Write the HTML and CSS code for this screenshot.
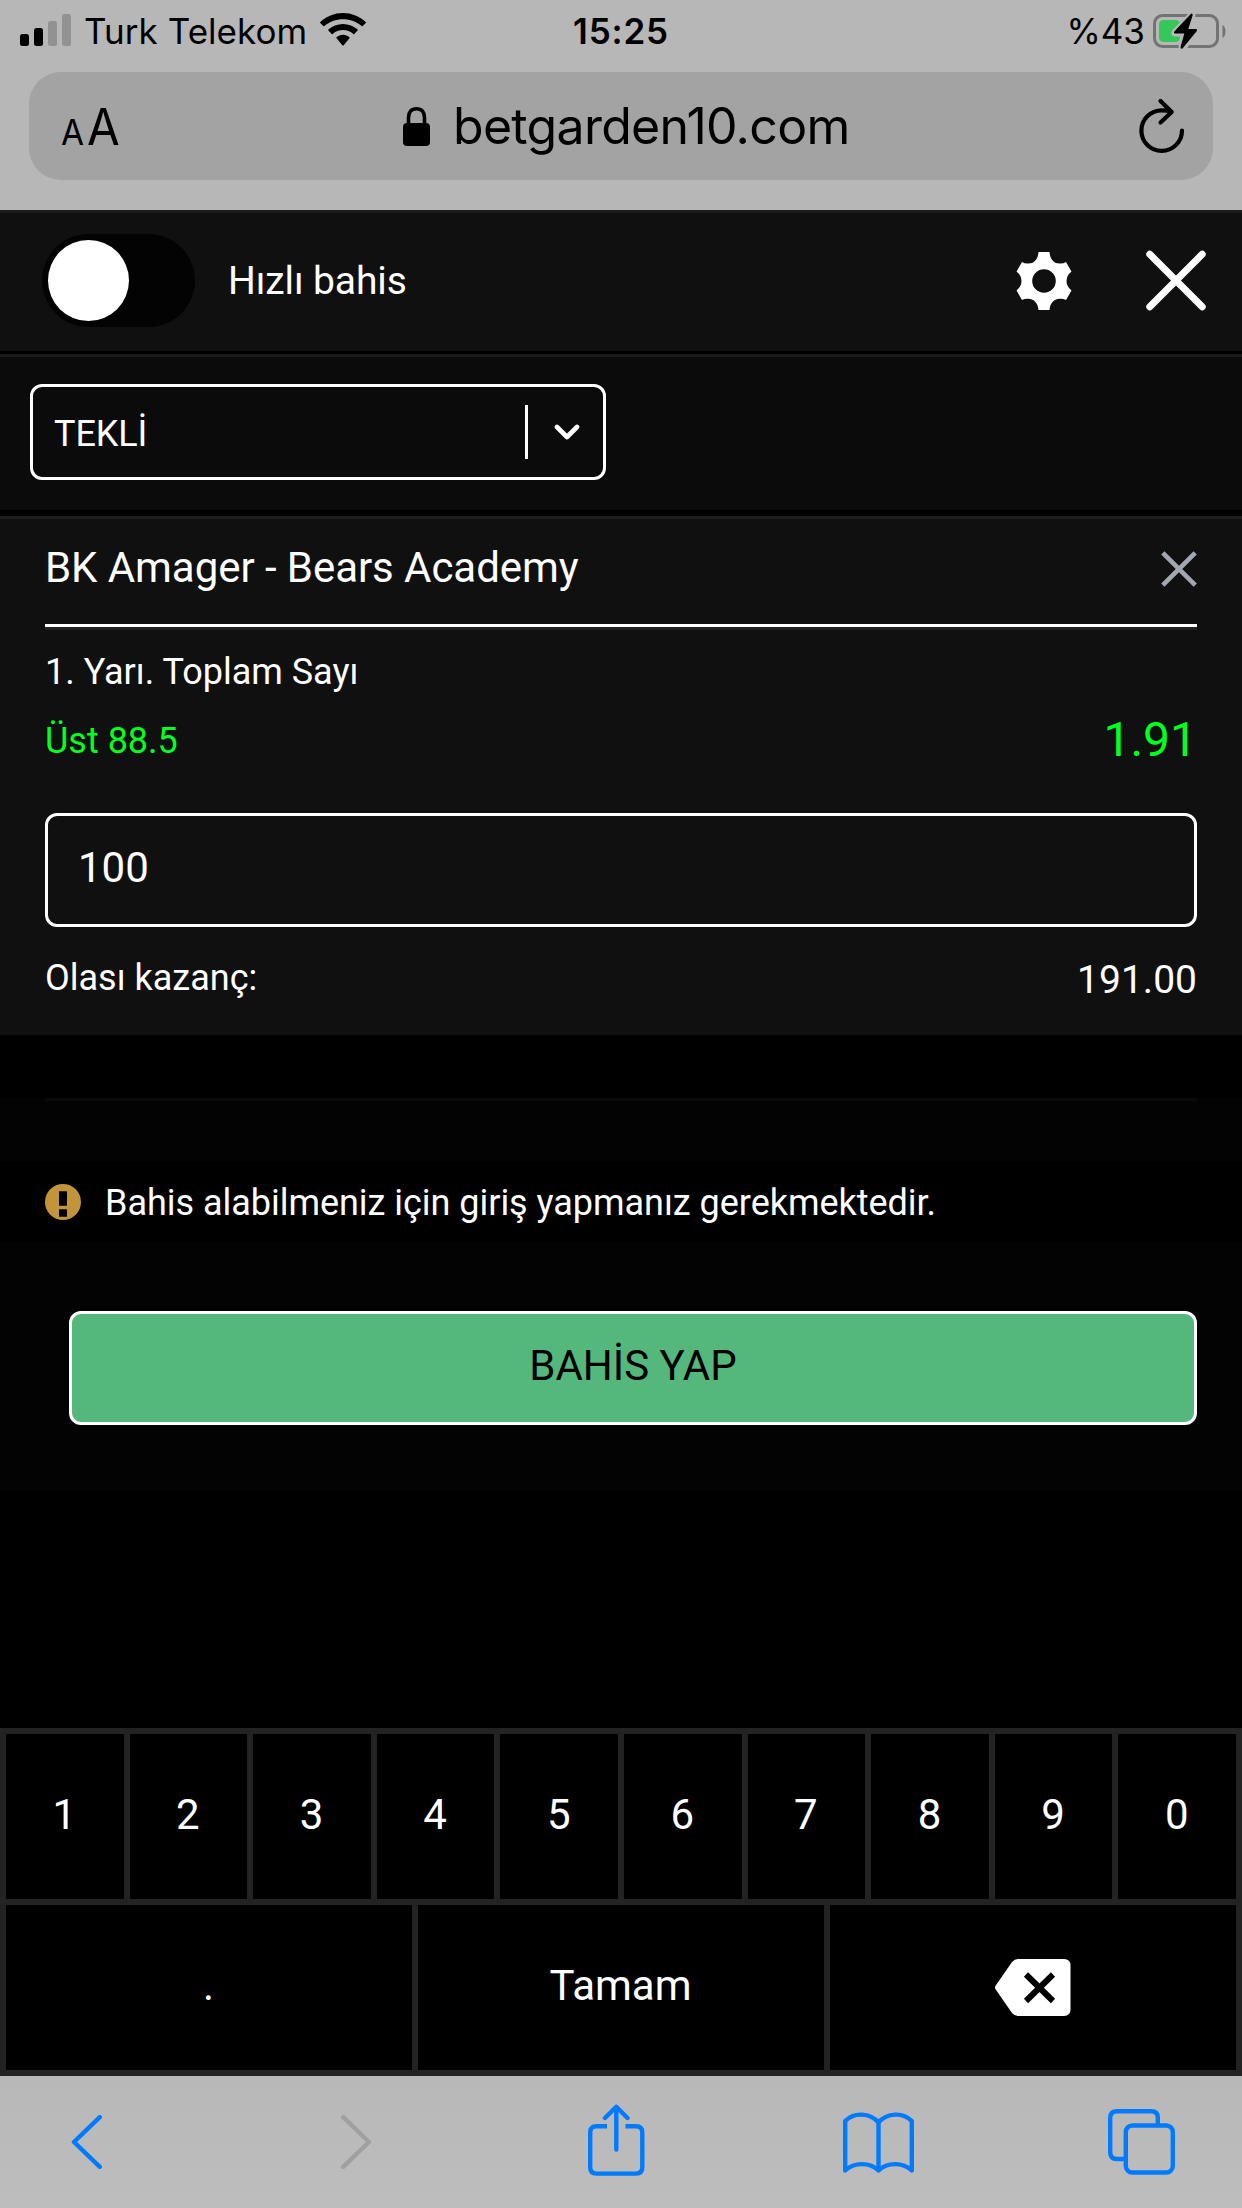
FILE: index.html
```html
<!DOCTYPE html>
<html lang="tr">
<head>
<meta charset="utf-8">
<title>betgarden10.com</title>
<link rel="stylesheet" href="styles.css">
</head>
<body>
<header class="browser">
  <div class="status">
    <div class="status-left">
      <svg class="signal" width="51" height="32" viewBox="0 0 51 32"><g><rect y="20" width="9" height="12" rx="2.5"/><rect x="14" y="14" width="9" height="18" rx="2.5"/></g><g fill="#929292"><rect x="28" y="7" width="9" height="25" rx="2.5"/><rect x="42" width="9" height="32" rx="2.5"/></g></svg>
      <span class="carrier">Turk Telekom</span>
      <svg class="wifi" width="46" height="33" viewBox="0 0 46 33"><path d="M23 0C14.300 0 6.300 3.400.3 9.100q-.5.500 0 1l3 3q.5.500 1 0C9.300 8.700 15.800 6.200 23 6.200s13.700 2.500 18.700 6.900q.5.500 1 0l3-3q.5-.500 0-1C39.700 3.400 31.700 0 23 0zM23 11c-5.600 0-10.800 2.100-14.600 5.600q-.6.500 0 1l3.300 3.400q.5.500 1 0c2.700-2.500 6.300-3.900 10.300-3.900s7.600 1.400 10.300 3.900q.5.500 1 0l3.300-3.400q.6-.500 0-1C33.800 13.100 28.600 11 23 11zM23 21.800c-2.500 0-4.700.9-6.400 2.400q-.6.500 0 1l5.700 7q.7.800 1.400 0l5.700-7q.6-.500 0-1c-1.700-1.500-3.900-2.400-6.400-2.400z"/></svg>
    </div>
    <span class="clock">15:25</span>
    <div class="status-right">
      <span class="percent">%43</span>
      <svg class="battery" width="74" height="37" viewBox="0 0 74 37"><rect x="1.500" y="2.500" width="63" height="31" rx="8" fill="none" stroke="#737373" stroke-width="3"/><path d="M69.500 12c4 1.800 4 11.200 0 13z" fill="#737373"/><rect x="6" y="7" width="21" height="22" rx="4.500" fill="#34c759"/><path d="M39 .500L21 19q-1 2 1 2h9L28 34q0 3 2 2L44 18q1-2-1-2h-7L40 2q0-2.500-1-1.500z" stroke="#b7b7b7" stroke-width="5" stroke-linejoin="round"/><path d="M38 .800L21.300 18.500q-1 2 1 2h9L27.500 34q.3 2.500 2 1.500L43.800 18q.8-2-1-2h-7.500L39.700 2q-.3-2.300-1.700-1.200z"/></svg>
    </div>
  </div>
  <div class="address">
    <div class="reader"><span class="small-a">A</span><span class="big-a">A</span></div>
    <svg class="lock" width="27" height="39" viewBox="0 0 27 39"><rect y="16" width="27" height="23" rx="4"/><path d="M5.500 18v-7.500C5.500 5 8.500 1.800 13.500 1.800s8 3.200 8 8.700V18" fill="none" stroke="#000" stroke-width="3.600"/></svg>
    <span class="url">betgarden10.com</span>
    <svg class="reload" width="46" height="56" viewBox="0 0 46 56" fill="none" stroke="#000" stroke-width="4.200" stroke-linecap="round" stroke-linejoin="round"><path d="M43 32.500A20.300 20.300 0 1 1 22.700 12.300q5 0 9.800 1.200M21.500 3l11.200 11L21.500 24.500"/></svg>
  </div>
</header>

<main class="slip">
  <section class="quick">
    <div class="toggle"><div class="knob"></div></div>
    <span class="quick-label">Hızlı bahis</span>
    <svg class="gear" width="56" height="58" viewBox="0 0 56 58"><path fill="#fff" fill-rule="evenodd" d="M22.500 0h11C34 7.500 38 11.500 43.500 11.500Q47.500 11.700 50 10L55.500 19.500Q50.500 23.500 50.500 29T55.500 38.500L50 48Q47.500 46.500 43.500 46.700C38 47 34 51 33.500 58h-11C22 51 18 47 12.500 46.700Q8.500 46.500 6 48L.5 38.500Q5.500 34.500 5.500 29T.5 19.500L6 10Q8.500 11.700 12.500 11.500C18 11.500 22 7.500 22.500 0zM28 17.200a11.800 11.800 0 1 0 0 23.600 11.800 11.800 0 0 0 0-23.600z"/></svg>
    <svg class="close" width="60" height="61" viewBox="0 0 60 61" stroke="#fff" stroke-width="7" stroke-linecap="round"><path d="M3.800 4.300L56.200 56.700M56.200 4.300L3.800 56.700"/></svg>
  </section>

  <section class="mode">
    <div class="select">
      <span class="select-text">TEKLİ</span>
      <span class="select-line"></span>
      <svg width="26" height="16" viewBox="0 0 26 16" fill="none" stroke="#fff" stroke-width="4.600" stroke-linecap="round" stroke-linejoin="round"><path d="M3 3l10 10L23 3"/></svg>
    </div>
  </section>

  <section class="bet">
    <div class="match">
      <span class="match-name">BK Amager - Bears Academy</span>
      <svg class="remove" width="36" height="36" viewBox="0 0 36 36" stroke="#a3a7b0" stroke-width="4.600"><path d="M1.800 1.800l32.400 32.400M34.200 1.800L1.800 34.200"/></svg>
    </div>
    <div class="market">1. Yarı. Toplam Sayı</div>
    <div class="pick"><span class="outcome">Üst 88.5</span><span class="odds">1.91</span></div>
    <div class="stake">100</div>
    <div class="payout"><span class="payout-label">Olası kazanç:</span><span class="payout-sum">191.00</span></div>
  </section>

  <section class="divider"><div class="divider-line"></div></section>

  <section class="notice">
    <svg width="36" height="36" viewBox="0 0 36 36"><circle cx="18" cy="18" r="18" fill="#c2953d"/><path d="M14 7.300h8v14.400h-8zM14 25.300h8v7.400h-8z"/></svg>
    <span class="notice-text">Bahis alabilmeniz için giriş yapmanız gerekmektedir.</span>
  </section>

  <section class="action"><div class="submit"><span>BAHİS YAP</span></div></section>
</main>

<section class="keypad">
  <div class="keys">
    <div class="key">1</div><div class="key">2</div><div class="key">3</div><div class="key">4</div><div class="key">5</div><div class="key">6</div><div class="key">7</div><div class="key">8</div><div class="key">9</div><div class="key">0</div>
  </div>
  <div class="keys">
    <div class="key">.</div>
    <div class="key"><span class="done">Tamam</span></div>
    <div class="key"><svg class="erase" width="76" height="57" viewBox="0 0 76 57"><path fill="#fff" d="M.4 27L17 3Q19.500 0 23 0H69q6.500 0 6.500 6.500v44Q75.500 57 69 57H23Q19.500 57 17 54L.4 30Q-.5 28.500.4 27z"/><path d="M31 15.500l27 26.500M58 15.500L31 42" stroke="#000" stroke-width="6"/></svg></div>
  </div>
</section>

<nav class="toolbar">
  <svg class="back" width="31" height="54" viewBox="0 0 31 54"><path d="M28.800 2.200L3 27l25.800 24.800"/></svg>
  <svg class="forward" width="31" height="54" viewBox="0 0 31 54"><path d="M2.200 2.200L28 27 2.200 51.800"/></svg>
  <svg class="share" width="57" height="72" viewBox="0 0 57 72"><path stroke-linecap="butt" d="M19 22.300H8.500q-6.300 0-6.300 6.300v34.700q0 6.300 6.300 6.300h39.500q6.300 0 6.300-6.300V28.600q0-6.300-6.300-6.300H37.500"/><path d="M28.300 45.500V3M17 14L28.300 2.800 39.500 14"/></svg>
  <svg class="book" width="71" height="61" viewBox="0 0 71 61"><path d="M35.500 58.500V10.500C27 .5 11 0 2.200 9v49.500C11 50 27 50 35.500 58.500 44 50 60 50 68.800 58.500V9C60 0 44 .500 35.500 10.500"/></svg>
  <svg class="tabs" width="67" height="66" viewBox="0 0 67 66"><path d="M16 50H9q-6.800 0-6.800-6.800V9Q2.200 2.200 9 2.200h34.500q6.300 0 6.300 6.300V16"/><rect x="17.800" y="16.500" width="47" height="47" rx="6.500"/></svg>
</nav>
</body>
</html>
```
FILE: styles.css
```css
* { box-sizing: border-box; }

body {
  margin: 0;
  width: 1242px;
  height: 2208px;
  overflow: hidden;
  display: flex;
  flex-direction: column;
  background: #000;
  color: #fff;
  font-family: Roboto, "Liberation Sans", sans-serif;
  font-size: 36px;
  white-space: nowrap;
}

svg { display: block; flex: none; }

/* Browser chrome */
.browser {
  height: 210px;
  background: #b7b7b7;
  color: #000;
  font-family: Inter, "Liberation Sans", sans-serif;
}

.status {
  height: 72px;
  padding: 0 15px 10px 20px;
  display: grid;
  grid-template-columns: 1fr auto 1fr;
  align-items: center;
  font-size: 35px;
}

.status-left, .status-right { display: flex; align-items: center; }
.status-left { gap: 13px; }
.status-right { justify-content: flex-end; gap: 8px; }
.signal { margin-top: -2px; }
.carrier { letter-spacing: .05px; }
.wifi { margin-top: -3px; }
.clock { margin-right: 5px; font-weight: 600; letter-spacing: .8px; }

.address {
  height: 108px;
  margin: 0 29px;
  padding: 0 28px 0 32px;
  display: flex;
  align-items: center;
  border-radius: 32px;
  background: #a3a3a3;
}

.reader {
  display: flex;
  align-items: baseline;
  gap: 3px;
  width: 342px;
  transform: scaleX(.93);
  transform-origin: left;
}

.small-a { font-size: 36px; }
.big-a { font-size: 51px; }
.url { margin-left: 23px; font-size: 50px; letter-spacing: -.7px; }
.reload { margin-left: auto; }

/* Bet slip */
.quick {
  height: 144px;
  padding: 0 36px 3px 42px;
  display: flex;
  align-items: center;
  border-top: 3px solid #1c1c1c;
  border-bottom: 3px solid #000;
  background: #101010;
}

.toggle { width: 153px; height: 93px; padding: 6px; border-radius: 47px; background: #030303; }
.knob { width: 81px; height: 81px; border-radius: 50%; background: #fff; }
.quick-label { margin-left: 33px; font-size: 39px; letter-spacing: -.1px; }
.gear { margin-left: auto; }
.close { margin-left: 74px; }

.mode {
  height: 162px;
  padding: 27px 30px;
  border-top: 3px solid #1a1a1a;
  border-bottom: 6px solid #000;
  background: #0b0b0b;
}

.select {
  width: 576px;
  height: 96px;
  padding: 0 23px 0 21px;
  display: flex;
  align-items: center;
  border: 3px solid #fff;
  border-radius: 12px;
}

.select-text { flex: 1; padding-top: 4px; letter-spacing: -.1px; }
.select-line { width: 3px; height: 54px; margin-right: 26px; background: #fff; }

.bet {
  height: 519px;
  padding: 0 45px;
  border-top: 3px solid #1e1e1e;
  background: #101010;
}

.match {
  height: 108px;
  padding-bottom: 6px;
  display: flex;
  align-items: center;
  justify-content: space-between;
  border-bottom: 3px solid #fff;
  box-shadow: 0 3px #222;
  font-size: 42px;
}

.match-name { padding-bottom: 2px; letter-spacing: -.06px; }
.remove { margin-top: 1px; }

.market { height: 84px; margin-top: 3px; line-height: 84px; }

.pick {
  height: 52px;
  display: flex;
  align-items: center;
  justify-content: space-between;
  color: #00ff22;
}

.outcome { padding-top: 2px; }
.odds { padding-bottom: 2px; font-size: 48px; }

.stake {
  height: 114px;
  margin-top: 47px;
  padding: 0 30px;
  border: 3px solid #fff;
  border-radius: 12px;
  font-size: 42px;
  line-height: 104px;
}

.payout {
  height: 102px;
  display: flex;
  align-items: center;
  justify-content: space-between;
}

.payout-sum { padding-top: 4px; font-size: 39px; }

.divider {
  height: 126px;
  padding: 63px 45px 0;
  background: linear-gradient(#000 63px, #030303 63px);
}

.divider-line { height: 3px; background: #0a0a0a; }

.notice {
  height: 81px;
  padding: 1px 45px 0;
  display: flex;
  align-items: center;
  gap: 24px;
}

.notice-text { padding-top: 1px; letter-spacing: -.03px; }

.action { height: 249px; padding: 69px 45px 0 69px; background: #030303; }

.submit {
  height: 114px;
  padding-bottom: 6px;
  display: flex;
  align-items: center;
  justify-content: center;
  border: 3px solid #fff;
  border-radius: 12px;
  background: #54b87c;
  color: #000;
  font-size: 42px;
}

/* Numeric keypad */
.keypad {
  margin-top: auto;
  height: 348px;
  padding: 6px;
  display: grid;
  grid-template-rows: 165px 165px;
  gap: 6px;
  background: #232323;
}

.keys { display: grid; grid-auto-flow: column; grid-auto-columns: 1fr; gap: 6px; }

.key {
  padding: 0 1px 4px 0;
  display: flex;
  align-items: center;
  justify-content: center;
  background: #000;
  font-size: 42px;
}

.erase { margin-top: 3px; }

/* Browser toolbar */
.toolbar {
  height: 132px;
  padding: 0 67px 0 71px;
  display: flex;
  align-items: flex-start;
  background: linear-gradient(#b8b8b8, #bdbdbd);
  fill: none;
  stroke: #007aff;
  stroke-width: 4.4px;
  stroke-linecap: round;
  stroke-linejoin: round;
}

.back { margin-top: 39px; }
.forward { margin: 39px 0 0 239px; stroke: #a0a0a0; }
.share { margin: 28px 0 0 216px; }
.book { margin: 36px 0 0 198px; }
.tabs { margin: 33px 0 0 194px; }
```
